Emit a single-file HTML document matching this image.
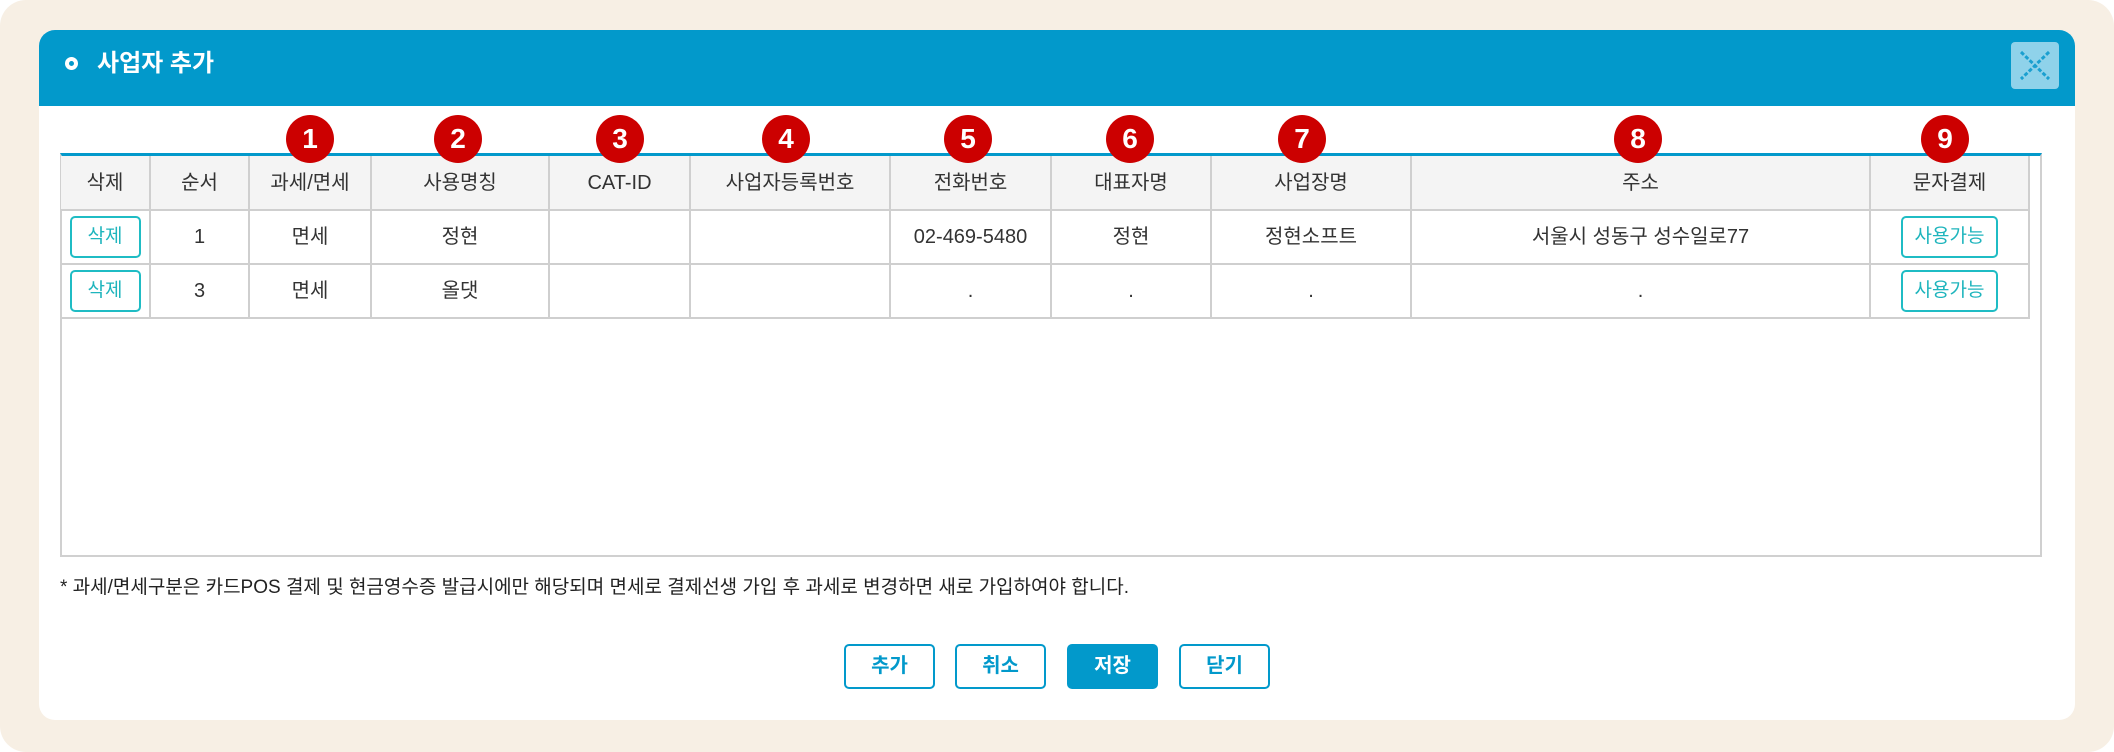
<!DOCTYPE html>
<html><head><meta charset="utf-8"><style>
*{margin:0;padding:0;box-sizing:border-box}
body{width:2114px;height:752px;background:#fff;font-family:"Liberation Sans","Noto Sans CJK KR",sans-serif;position:relative;overflow:hidden;color:#333}
.bg{position:absolute;left:0;top:0;width:2114px;height:752px;background:#f7efe4;border-radius:26px}
.panel{position:absolute;left:39px;top:30px;width:2036px;height:690px;background:#fff;border-radius:16px;overflow:hidden}
.hd{position:absolute;left:0;top:0;width:100%;height:76px;background:#0299cb}
.hd .dot{position:absolute;left:26px;top:27px;width:13px;height:13px;border:4px solid #fff;border-radius:50%}
.hd .t{position:absolute;left:58px;top:18px;font-size:24px;font-weight:bold;color:#fff;line-height:32px}
.cl{position:absolute;left:1972px;top:12px;width:48px;height:47px;background:#8fd2ea;border-radius:4px}
.box{position:absolute;left:60px;top:153px;width:1982px;height:404px;border:2px solid #d0d0d0;border-top:3px solid #0299cb}
table{position:absolute;left:61px;top:156px;border-collapse:collapse;table-layout:fixed}
td,th{border:2px solid #cfcfcf;text-align:center;font-size:20px;font-weight:normal;color:#333;line-height:26px;vertical-align:middle}
th{background:#f4f4f4;height:54px}
td{height:54px}
tr>*:first-child{border-left:none}
tr:first-child th{border-top:none}
.b{display:inline-block;border:2px solid #1fbcc4;border-radius:5px;color:#1fb5bd;font-size:19px;height:42px;line-height:38px;vertical-align:middle}
.c{position:absolute;top:115px;width:48px;height:48px;margin-left:-24px;border-radius:50%;background:#cc0000;color:#fff;font-weight:bold;font-size:28px;text-align:center;line-height:48px}
.note{position:absolute;left:60px;top:575px;font-size:19px;color:#222;line-height:26px}
.btn{position:absolute;top:644px;width:91px;height:45px;border:2px solid #0299cb;border-radius:5px;color:#0299cb;font-weight:bold;font-size:20px;text-align:center;line-height:41px;background:#fff}
</style></head><body>
<div class="bg"></div>
<div class="panel">
<div class="hd"><div class="dot"></div><div class="t">사업자 추가</div>
<div class="cl"><svg width="48" height="47"><path d="M10 10L38 37M38 10L10 37" stroke="#1a9fd0" stroke-width="3" stroke-dasharray="4 2"/></svg></div></div>
</div>
<div class="box"></div>
<table>
<colgroup><col style="width:89px"><col style="width:99px"><col style="width:122px"><col style="width:178px"><col style="width:141px"><col style="width:200px"><col style="width:161px"><col style="width:160px"><col style="width:200px"><col style="width:459px"><col style="width:159px"></colgroup>
<tr><th>삭제</th><th>순서</th><th>과세/면세</th><th>사용명칭</th><th>CAT-ID</th><th>사업자등록번호</th><th>전화번호</th><th>대표자명</th><th>사업장명</th><th>주소</th><th>문자결제</th></tr>
<tr><td><span class="b" style="width:71px">삭제</span></td><td>1</td><td>면세</td><td>정현</td><td></td><td></td><td>02-469-5480</td><td>정현</td><td>정현소프트</td><td>서울시 성동구 성수일로77</td><td><span class="b" style="width:97px">사용가능</span></td></tr>
<tr><td><span class="b" style="width:71px">삭제</span></td><td>3</td><td>면세</td><td>올댓</td><td></td><td></td><td>.</td><td>.</td><td>.</td><td>.</td><td><span class="b" style="width:97px">사용가능</span></td></tr>
</table>
<div class="c" style="left:310px">1</div>
<div class="c" style="left:458px">2</div>
<div class="c" style="left:620px">3</div>
<div class="c" style="left:786px">4</div>
<div class="c" style="left:968px">5</div>
<div class="c" style="left:1130px">6</div>
<div class="c" style="left:1302px">7</div>
<div class="c" style="left:1638px">8</div>
<div class="c" style="left:1945px">9</div>
<div class="note">* 과세/면세구분은 카드POS 결제 및 현금영수증 발급시에만 해당되며 면세로 결제선생 가입 후 과세로 변경하면 새로 가입하여야 합니다.</div>
<div class="btn" style="left:844px">추가</div>
<div class="btn" style="left:955px">취소</div>
<div class="btn" style="left:1067px;background:#0299cb;color:#fff">저장</div>
<div class="btn" style="left:1179px">닫기</div>
</body></html>
